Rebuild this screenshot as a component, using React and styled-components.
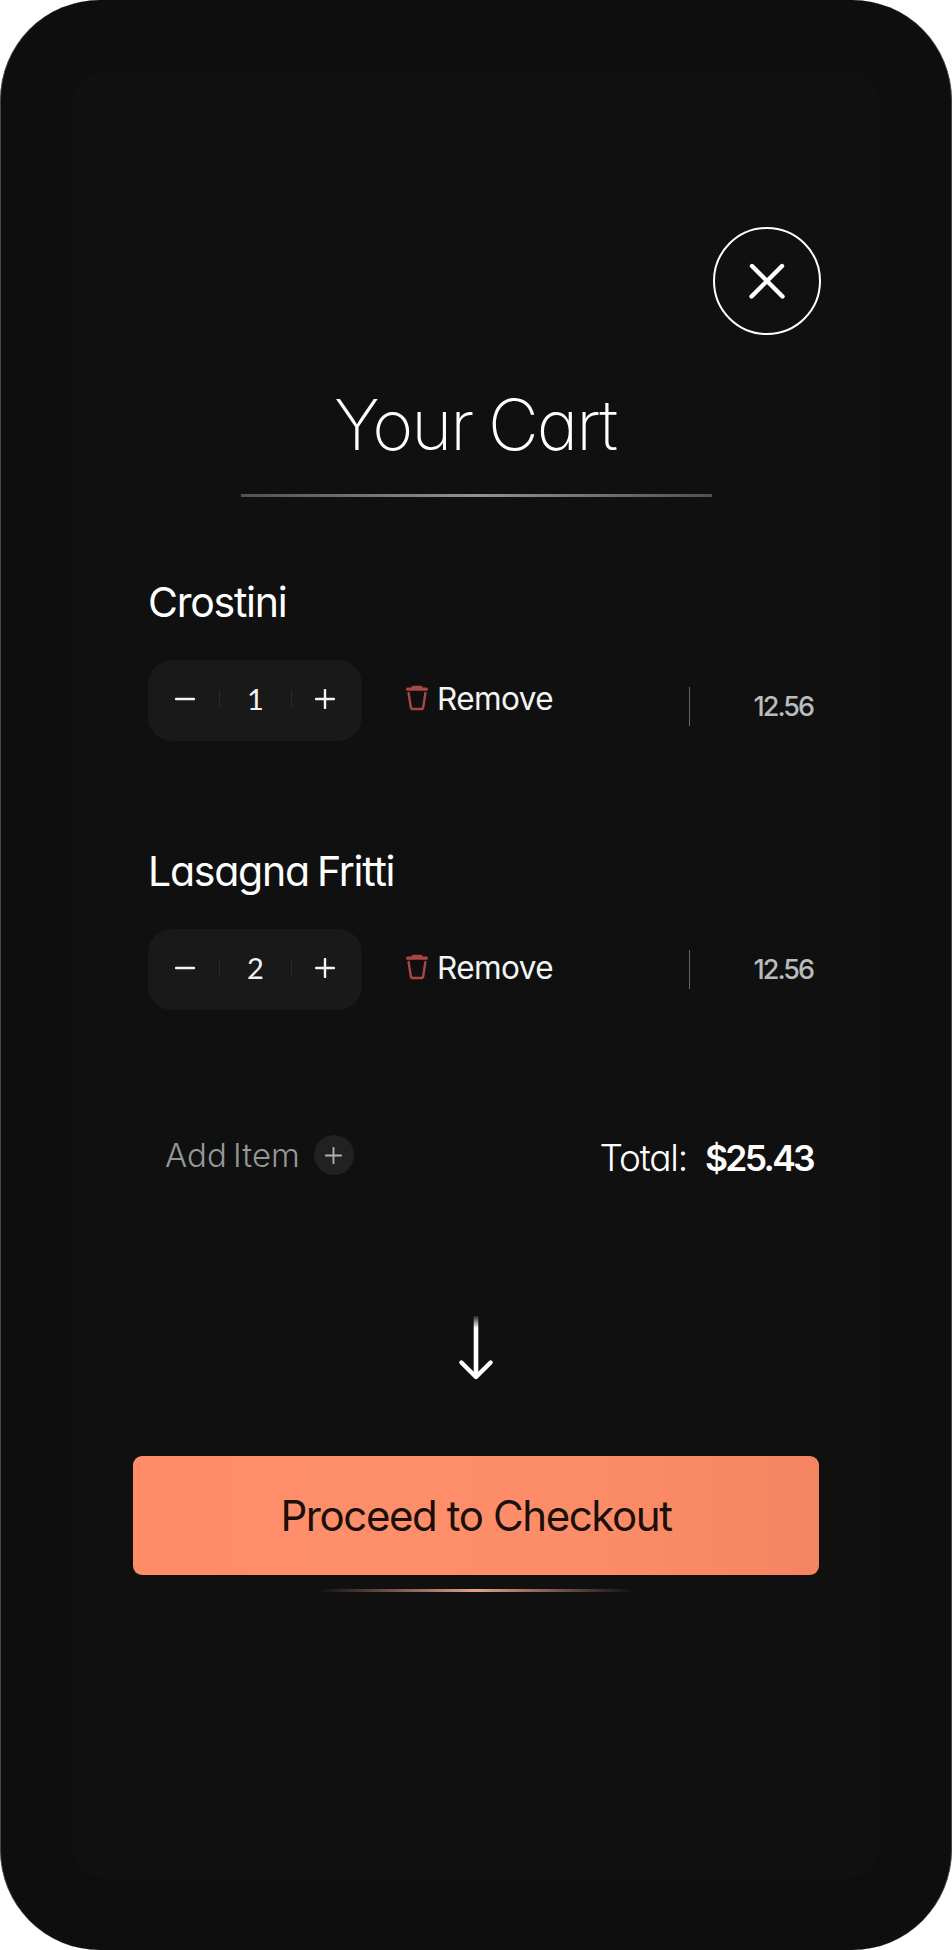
import React from "react";
import styled, { createGlobalStyle } from "styled-components";

const GlobalStyle = createGlobalStyle`
  * {
    box-sizing: border-box;
  }
  body {
    margin: 0;
    background: #fff;
    font-family: Inter, "Liberation Sans", sans-serif;
    font-feature-settings: "cv11", "ss03";
  }
`;

const items = [
  { name: "Crostini", count: 1, price: "12.56", drop: 6 },
  { name: "Lasagna Fritti", count: 2, price: "12.56", drop: 0 },
];

const Trash = () => (
  <svg width="22" height="26" viewBox="0 0 22 26" fill="none">
    <path d="M1.6 4.2h18.8M7 2.4h8" stroke="#a94747" strokeWidth="3.2" strokeLinecap="round" />
    <path
      d="M2.6 8l2.2 14.2q.3 1.8 2 1.8h8.4q1.7 0 2-1.8L19.4 8"
      stroke="#a94747"
      strokeWidth="2.4"
      strokeLinecap="round"
    />
  </svg>
);

const Plus = ({ size, width }) => (
  <svg width={size} height={size} viewBox="0 0 20 20" fill="none">
    <path d="M1 10h18M10 1v18" stroke="currentColor" strokeWidth={width} strokeLinecap="round" />
  </svg>
);

const CartItem = ({ name, count, price, drop }) => (
  <Item>
    <ItemName>{name}</ItemName>
    <ItemRow>
      <Stepper>
        <StepButton $width={69}>
          <svg width="20" height="20" viewBox="0 0 20 20" fill="none">
            <path d="M1 10h18" stroke="currentColor" strokeWidth="2.4" strokeLinecap="round" />
          </svg>
        </StepButton>
        <Count>{count}</Count>
        <StepButton $width={65}>
          <Plus size={20} width={2.4} />
        </StepButton>
      </Stepper>
      <Remove>
        <Trash />
        <RemoveText>Remove</RemoveText>
      </Remove>
      <Price $drop={drop}>{price}</Price>
    </ItemRow>
  </Item>
);

const App = () => {
  return (
    <>
      <GlobalStyle />
      <Phone>
        <Screen>
          <Close aria-label="close">
            <svg width="36" height="36" viewBox="0 0 36 36" fill="none">
              <path d="M3 3l30.5 30.5M33 3L2.5 33.5" stroke="#fff" strokeWidth="4.4" strokeLinecap="round" />
            </svg>
          </Close>
          <Title>Your Cart</Title>
          <Items>
            {items.map((item) => (
              <CartItem key={item.name} {...item} />
            ))}
          </Items>
          <Summary>
            <AddItem>
              <AddText>Add Item</AddText>
              <AddCircle>
                <Plus size={17} width={2.2} />
              </AddCircle>
            </AddItem>
            <Total>
              <TotalLabel>Total:</TotalLabel>
              <TotalPrice>$25.43</TotalPrice>
            </Total>
          </Summary>
          <Arrow width="36" height="66" viewBox="0 0 36 66" fill="none">
            <defs>
              <linearGradient id="stem" x1="0" y1="0" x2="0" y2="1">
                <stop offset="0" stopColor="#fff" stopOpacity="0.1" />
                <stop offset="0.2" stopColor="#fff" />
              </linearGradient>
            </defs>
            <rect x="15.7" y="1" width="4.6" height="60" fill="url(#stem)" />
            <path d="M3.4 47.5L18 62l14.6-14.5" stroke="#fff" strokeWidth="4.4" strokeLinecap="round" strokeLinejoin="round" />
          </Arrow>
          <Checkout>
            <CheckoutText>Proceed to Checkout</CheckoutText>
          </Checkout>
          <Glow />
        </Screen>
      </Phone>
    </>
  );
};

const Phone = styled.div`
  width: 952px;
  height: 1950px;
  padding: 72px;
  border-radius: 100px;
  border-left: 1px solid #444;
  border-right: 1px solid #444;
  background: #0e0e0e;
`;

const Screen = styled.main`
  display: flex;
  flex-direction: column;
  align-items: center;
  height: 1806px;
  margin: 0 -1px;
  padding: 155px 61px 0 61px;
  border-radius: 30px;
  background: #101010;
`;

const Close = styled.button`
  display: flex;
  align-items: center;
  justify-content: center;
  align-self: flex-end;
  width: 108px;
  height: 108px;
  margin-right: -2px;
  padding: 0;
  border: 2px solid #fff;
  border-radius: 50%;
  background: transparent;
`;

const Title = styled.h1`
  width: 471px;
  height: 112px;
  margin: 50px 0 0;
  padding-right: 2px;
  border-bottom: 3px solid;
  border-image: linear-gradient(90deg, #505251, #929493 50%, #505251) 1;
  color: #fff;
  font-size: 70px;
  font-weight: 200;
  line-height: 80px;
  letter-spacing: -2px;
  word-spacing: -2px;
  text-align: center;
`;

const Items = styled.section`
  width: 100%;
  padding: 80px 4px 0 15px;
`;

const Item = styled.article`
  height: 269px;
`;

const ItemName = styled.h2`
  margin: 0;
  color: #fff;
  font-size: 41px;
  font-weight: 400;
  line-height: 50px;
  letter-spacing: -1.25px;
  word-spacing: -2px;
`;

const ItemRow = styled.div`
  display: flex;
  align-items: center;
  height: 81px;
  margin-top: 33px;
`;

const Stepper = styled.div`
  display: flex;
  align-items: center;
  width: 214px;
  height: 81px;
  padding: 0 0 3px 2px;
  border-radius: 24px;
  background: #191919;
`;

const StepButton = styled.button`
  display: flex;
  align-items: center;
  justify-content: center;
  width: ${(props) => props.$width}px;
  height: 24px;
  padding: 0;
  border: 0;
  background: transparent;
  color: #f4f6f6;
`;

const Count = styled.span`
  width: 73px;
  height: 18px;
  border-left: 1px solid #2a2a2a;
  border-right: 1px solid #2a2a2a;
  color: #f1f3f3;
  font-family: Lato, sans-serif;
  font-size: 29px;
  line-height: 17px;
  text-align: center;
`;

const Remove = styled.button`
  display: flex;
  align-items: center;
  gap: 9px;
  margin-left: 44px;
  padding: 0 0 5px;
  border: 0;
  background: transparent;
`;

const RemoveText = styled.span`
  padding-top: 2px;
  color: #f3f5f5;
  font-family: Inter, sans-serif;
  font-size: 31.5px;
  font-weight: 400;
  line-height: 36px;
  letter-spacing: -0.6px;
`;

const Price = styled.div`
  display: flex;
  align-items: center;
  justify-content: flex-end;
  width: 126px;
  height: 39px;
  margin-left: auto;
  padding-right: 2px;
  border-left: 1px solid #666;
  color: #b9bcbd;
  font-size: 27px;
  font-weight: 500;
  letter-spacing: -2px;
  transform: translateY(${(props) => props.$drop}px);
`;

const Summary = styled.section`
  display: flex;
  align-items: center;
  justify-content: space-between;
  width: 100%;
  height: 50px;
  margin-top: 15px;
  margin-bottom: 1px;
  padding: 0 6px 0 32px;
`;

const AddItem = styled.button`
  display: flex;
  align-items: center;
  gap: 14px;
  padding: 0;
  border: 0;
  background: transparent;
`;

const AddText = styled.span`
  color: #949898;
  font-family: Inter, sans-serif;
  font-size: 33px;
  font-weight: 300;
  letter-spacing: 0;
  word-spacing: -3px;
`;

const AddCircle = styled.span`
  display: flex;
  align-items: center;
  justify-content: center;
  width: 40px;
  height: 40px;
  border-radius: 50%;
  background: #212121;
  color: #b0b3b3;
`;

const Total = styled.div`
  display: flex;
  align-items: baseline;
  gap: 18px;
  padding-top: 4px;
  color: #fff;
`;

const TotalLabel = styled.span`
  font-size: 37px;
  font-weight: 300;
  letter-spacing: -1.2px;
`;

const TotalPrice = styled.span`
  font-size: 35.5px;
  font-weight: 600;
  letter-spacing: -2.7px;
`;

const Arrow = styled.svg`
  flex: none;
  margin-top: 134px;
`;

const Checkout = styled.button`
  flex: none;
  width: 686px;
  height: 119px;
  margin-top: 75px;
  padding: 0;
  border: 0;
  border-radius: 9px;
  background: linear-gradient(90deg, #fd8c67, #ff8f6a 35%, #fb8c67 70%, #f58562);
`;

const CheckoutText = styled.span`
  color: #1b0f0a;
  font-family: Inter, sans-serif;
  font-size: 42px;
  font-weight: 400;
  letter-spacing: -1.4px;
`;

const Glow = styled.div`
  width: 316px;
  height: 3px;
  margin-top: 14px;
  background: linear-gradient(90deg, transparent, #e3a18c 50%, transparent);
`;

export default App;
